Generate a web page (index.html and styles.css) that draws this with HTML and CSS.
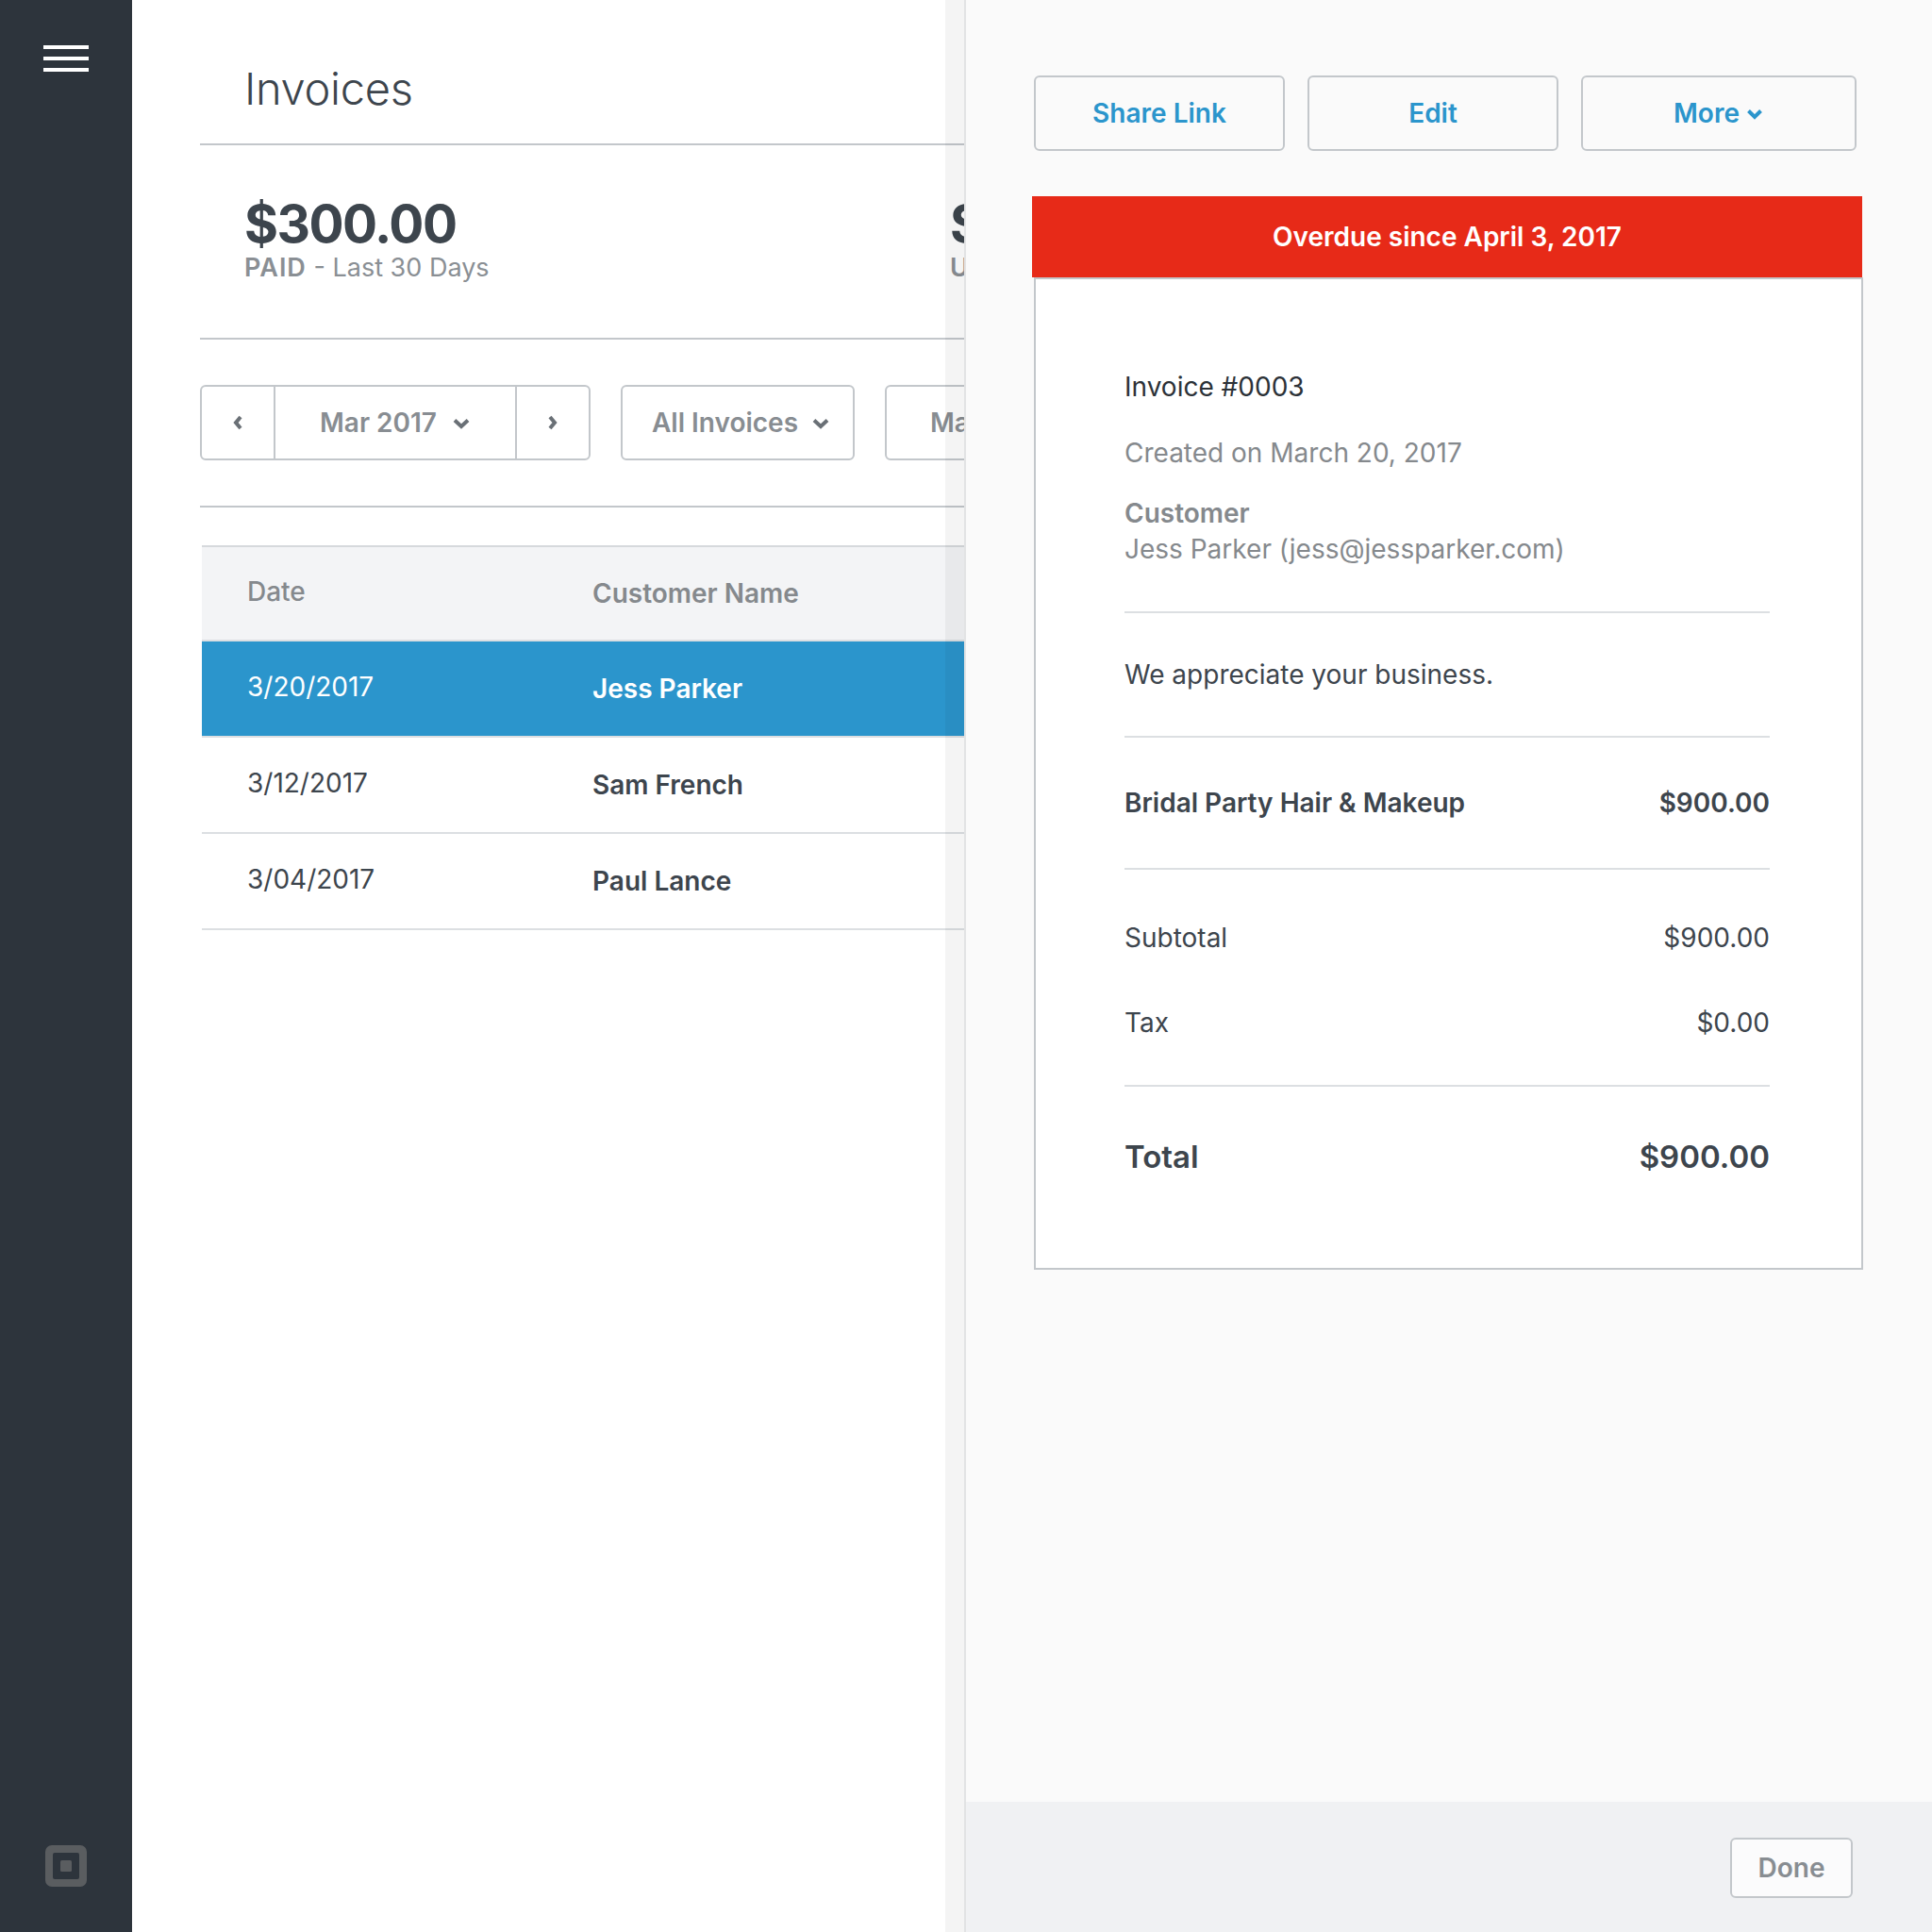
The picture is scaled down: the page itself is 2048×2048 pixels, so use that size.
FILE: index.html
```html
<!DOCTYPE html>
<html lang="en">
<head>
<meta charset="utf-8">
<title>Invoices</title>
<link rel="stylesheet" href="styles.css">
</head>
<body>
<div class="app">
  <nav class="rail">
    <div class="burger"><span></span><span></span><span></span></div>
    <svg class="logo" width="44" height="44" viewBox="0 0 44 44"><path fill-rule="evenodd" fill="#5a5d60" d="M7 0h30a7 7 0 0 1 7 7v30a7 7 0 0 1-7 7H7a7 7 0 0 1-7-7V7a7 7 0 0 1 7-7zM10 8a2 2 0 0 0-2 2v24a2 2 0 0 0 2 2h24a2 2 0 0 0 2-2V10a2 2 0 0 0-2-2z"/><rect x="16" y="16" width="12" height="12" rx="1.5" fill="#5a5d60"/></svg>
  </nav>
  <main class="main">
    <div class="main-inner">
      <h1 class="title">Invoices</h1>
      <section class="stats">
        <div class="stat">
          <div class="amount">$300.00</div>
          <div class="stat-label"><b>PAID</b> - Last 30 Days</div>
        </div>
        <div class="stat">
          <div class="amount">$1,200.00</div>
          <div class="stat-label"><b>UNPAID</b> - Last 30 Days</div>
        </div>
      </section>
      <section class="filters">
        <div class="btn-group">
          <div class="seg seg-arrow"><svg width="10" height="18" viewBox="0 0 10 18"><path d="M8 3 3 9l5 6" class="chev"/></svg></div>
          <div class="seg seg-month">Mar 2017<svg class="caret" width="20" height="12" viewBox="0 0 20 12"><path d="M3 2.500l7 6.500 7-6.500" class="chev"/></svg></div>
          <div class="seg seg-arrow"><svg width="10" height="18" viewBox="0 0 10 18"><path d="M2 3l5 6-5 6" class="chev"/></svg></div>
        </div>
        <div class="select select-all">All Invoices<svg class="caret" width="20" height="12" viewBox="0 0 20 12"><path d="M3 2.500l7 6.500 7-6.500" class="chev"/></svg></div>
        <div class="select select-more">Mark as Paid</div>
      </section>
      <div class="table">
        <div class="row head"><div class="c-date">Date</div><div class="c-name">Customer Name</div></div>
        <div class="row selected"><div class="c-date">3/20/2017</div><div class="c-name">Jess Parker</div></div>
        <div class="row"><div class="c-date">3/12/2017</div><div class="c-name">Sam French</div></div>
        <div class="row"><div class="c-date">3/04/2017</div><div class="c-name">Paul Lance</div></div>
      </div>
    </div>
    <div class="edge-shade"></div>
  </main>
  <aside class="panel">
    <div class="panel-body">
      <div class="actions">
        <div class="action action-share">Share Link</div>
        <div class="action action-edit">Edit</div>
        <div class="action action-more">More<svg class="caret-blue" width="20" height="12" viewBox="0 0 20 12"><path d="M3.500 2.500l6.500 6.500 6.500-6.500" class="chev-blue"/></svg></div>
      </div>
      <div class="banner">Overdue since April 3, 2017</div>
      <article class="card">
        <div class="inv-no">Invoice #0003</div>
        <div class="created">Created on March 20, 2017</div>
        <div class="cust-label">Customer</div>
        <div class="cust">Jess Parker (jess@jessparker.com)</div>
        <div class="message">We appreciate your business.</div>
        <div class="line-item"><span>Bridal Party Hair &amp; Makeup</span><span>$900.00</span></div>
        <div class="totals">
          <div class="sum-row"><span>Subtotal</span><span>$900.00</span></div>
          <div class="sum-row"><span>Tax</span><span>$0.00</span></div>
        </div>
        <div class="grand"><span>Total</span><span>$900.00</span></div>
      </article>
    </div>
    <footer class="panel-foot"><div class="done">Done</div></footer>
  </aside>
</div>
</body>
</html>
```
FILE: styles.css
```css
* { box-sizing: border-box; }
html, body { margin: 0; padding: 0; }
body { font-family: "Inter", "Liberation Sans", sans-serif; color: #3d454d; background: #fff; }
.app { display: flex; width: 2048px; height: 2048px; overflow: hidden; }
.rail { width: 140px; flex: none; background: #2d343c; display: flex; flex-direction: column; justify-content: space-between; align-items: center; padding: 48px 0 48px; }
.burger { width: 48px; display: flex; flex-direction: column; gap: 8px; }
.burger span { height: 4px; background: #fff; display: block; }
.logo { display: block; margin-top: auto; }
.main { position: relative; width: 882px; flex: none; overflow: hidden; background: #fff; }
.main-inner { width: 1400px; padding-left: 72px; }
.title { margin: 0; height: 154px; width: 810px; padding: 63px 0 0 47px; font-size: 47px; line-height: 62px; font-weight: 300; letter-spacing: -0.3px; border-bottom: 2px solid #c3c7cb; }
.stats { width: 810px; height: 206px; border-bottom: 2px solid #c3c7cb; display: flex; padding: 53px 0 0 47px; gap: 478px; flex-wrap: nowrap; }
.stat { flex: none; width: 270px; }
.amount { font-size: 55px; line-height: 60px; font-weight: 700; letter-spacing: -1.500px; white-space: nowrap; }
.stat-label { font-size: 27px; line-height: 34px; color: #8a8f94; white-space: nowrap; }
.stat-label b { font-weight: 600; letter-spacing: 1px; }
.filters { width: 810px; height: 178px; border-bottom: 2px solid #c3c7cb; display: flex; gap: 32px; padding-top: 48px; overflow: visible; }
.btn-group { display: flex; height: 80px; width: 414px; flex: none; border: 2px solid #c3c7cb; border-radius: 6px; }
.seg { display: flex; align-items: center; justify-content: center; font-size: 28px; font-weight: 600; color: #888d92; }
.seg-arrow { width: 76px; }
.seg-month { flex: 1; border-left: 2px solid #c3c7cb; border-right: 2px solid #c3c7cb; }
.caret { margin-left: 16px; margin-top: 2px; }
.chev { fill: none; stroke: #6a7076; stroke-width: 4; }
.select { height: 80px; flex: none; border: 2px solid #c3c7cb; border-radius: 6px; display: flex; align-items: center; font-size: 28px; font-weight: 600; color: #888d92; white-space: nowrap; overflow: hidden; }
.select-all { width: 248px; padding-left: 31px; }
.select-all .caret { margin-left: 14px; }
.select-more { width: 300px; padding-left: 46px; }
.table { width: 810px; margin-top: 40px; margin-left: 2px; border-top: 2px solid #d6d9dc; }
.row { display: flex; height: 102px; border-bottom: 2px solid #dcdfe2; font-size: 28px; align-items: center; }
.head { height: 100px; background: #f3f4f6; color: #85898d; }
.selected { background: #2b95cc; color: #fff; border-bottom: 2px solid #dcdfe2; height: 102px; }
.c-date { width: 366px; padding-left: 48px; padding-bottom: 4px; font-weight: 400; }
.head .c-date { font-weight: 500; }
.c-name { font-weight: 600; }
.row .c-date { width: 414px; }
.edge-shade { position: absolute; top: 0; right: 0; bottom: 0; width: 20px; background: rgba(0,0,0,.045); pointer-events: none; }
.panel { flex: 1; background: #fafafa; display: flex; flex-direction: column; border-left: 2px solid #e2e3e4; }
.panel-body { flex: 1; padding: 80px 0 0 70px; }
.actions { display: flex; gap: 24px; padding-left: 2px; }
.action { height: 80px; width: 266px; border: 2px solid #c3c7cb; border-radius: 6px; display: flex; align-items: center; justify-content: center; font-size: 28px; font-weight: 600; color: #2b95cc; }
.action-more { width: 292px; }
.caret-blue { margin-left: 6px; margin-top: 2px; }
.chev-blue { fill: none; stroke: #2b95cc; stroke-width: 4; }
.banner { margin-top: 48px; height: 86px; width: 880px; background: #e72a18; color: #fff; display: flex; align-items: center; justify-content: center; font-size: 28px; font-weight: 600; }
.card { width: 879px; height: 1052px; margin-left: 2px; background: #fff; border: 2px solid #c3c7cb; padding: 96px 97px 0 94px; font-size: 28px; }
.inv-no { line-height: 36px; color: #2c3238; }
.created { margin-top: 34px; line-height: 36px; color: #85898d; }
.cust-label { margin-top: 28px; line-height: 36px; font-weight: 600; color: #85898d; }
.cust { line-height: 40px; color: #85898d; padding-bottom: 46px; border-bottom: 2px solid #dcdfe2; }
.message { height: 132px; display: flex; align-items: center; border-bottom: 2px solid #dcdfe2; }
.line-item { height: 140px; display: flex; justify-content: space-between; align-items: center; font-weight: 600; border-bottom: 2px solid #dcdfe2; }
.totals { height: 230px; padding-top: 54px; border-bottom: 2px solid #dcdfe2; }
.sum-row { display: flex; justify-content: space-between; line-height: 36px; margin-bottom: 54px; }
.grand { display: flex; justify-content: space-between; align-items: center; height: 148px; font-size: 33px; font-weight: 600; }
.panel-foot { height: 138px; background: #f0f1f3; display: flex; justify-content: flex-end; align-items: flex-start; padding: 38px 84px 0 0; }
.done { width: 130px; height: 64px; background: #fbfbfc; border: 2px solid #c3c7cb; border-radius: 6px; display: flex; align-items: center; justify-content: center; font-size: 28px; font-weight: 600; color: #888d92; }
```
